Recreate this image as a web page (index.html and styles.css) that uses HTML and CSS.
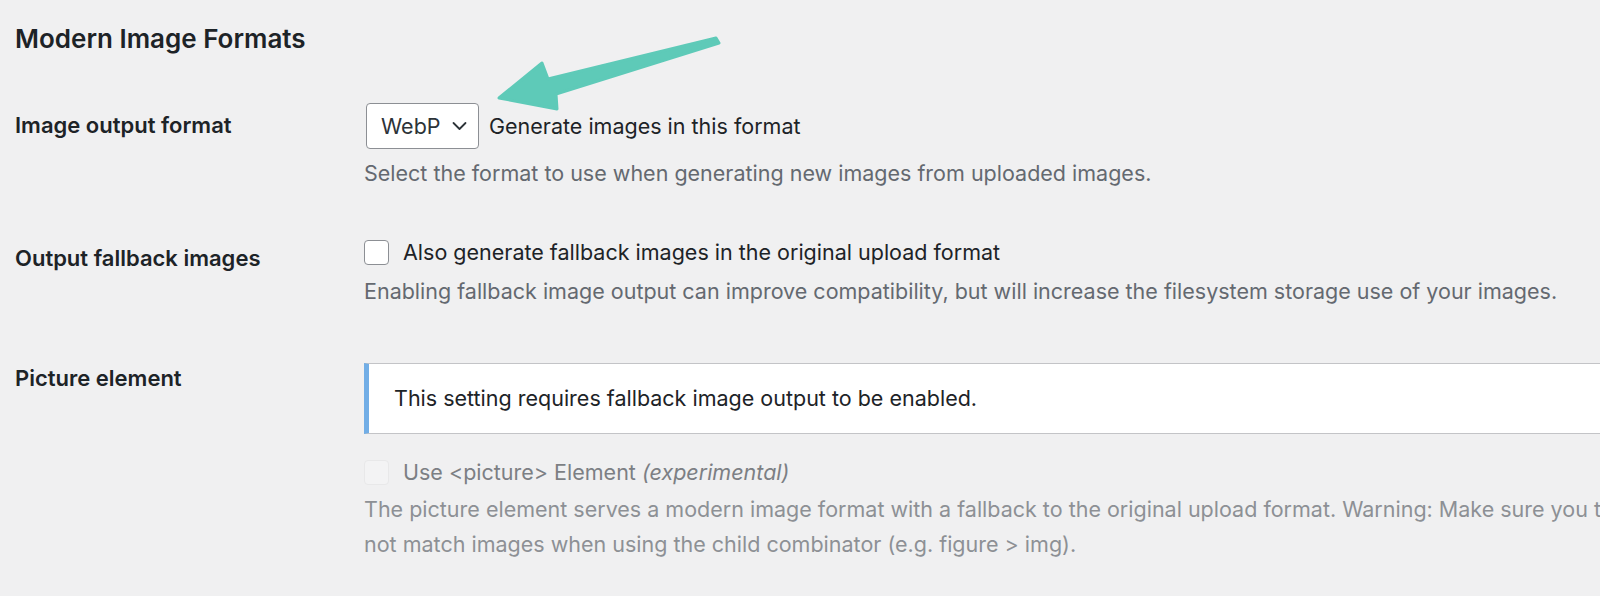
FILE: index.html
```html
<!DOCTYPE html>
<html lang="en">
<head>
    <meta charset="UTF-8">
    <meta name="viewport" content="width=device-width, initial-scale=1.0">
    <title>Media Settings</title>
    <link rel="stylesheet" href="styles.css">
</head>
<body>
    <div class="wrap">
        <h2 class="section-title">Modern Image Formats</h2>

        <div class="form-row row-format">
            <div class="row-label">Image output format</div>
            <div class="row-field">
                <div class="select-line">
                    <span class="select">
                        WebP
                        <svg class="chevron" width="15" height="10" viewBox="0 0 15 10"><path d="M1.5 2 L7.5 8 L13.5 2" fill="none" stroke="#2c3338" stroke-width="1.8" stroke-linecap="round" stroke-linejoin="round"/></svg>
                    </span>
                    <span class="after-select">Generate images in this format</span>
                </div>
                <p class="description">Select the format to use when generating new images from uploaded images.</p>
            </div>
        </div>

        <div class="form-row row-fallback">
            <div class="row-label">Output fallback images</div>
            <div class="row-field">
                <label class="check-line">
                    <span class="checkbox"></span>
                    <span>Also generate fallback images in the original upload format</span>
                </label>
                <p class="description">Enabling fallback image output can improve compatibility, but will increase the filesystem storage use of your images.</p>
            </div>
        </div>

        <div class="form-row row-picture">
            <div class="row-label">Picture element</div>
            <div class="row-field">
                <div class="notice">This setting requires fallback image output to be enabled.</div>
                <label class="check-line disabled">
                    <span class="checkbox"></span>
                    <span>Use &lt;picture&gt; Element <em>(experimental)</em></span>
                </label>
                <p class="description disabled">The picture element serves a modern image format with a fallback to the original upload format. Warning: Make sure you test your theme and plugins for compatibility. In particular, CSS selectors will<br>not match images when using the child combinator (e.g. figure &gt; img).</p>
            </div>
        </div>
    </div>

    <!-- annotation arrow drawn over the screenshot -->
    <svg class="pointer-arrow" width="1600" height="140" viewBox="0 0 1600 140">
        <polygon points="499,98 542,63 548,79 716,38 719,43 556,94 557,109" fill="#5ecab8" stroke="#5ecab8" stroke-width="3" stroke-linejoin="round"/>
    </svg>
</body>
</html>
```

FILE: styles.css
```css
html {
    background-color: #f0f0f1;
}

body {
    margin: 0;
    padding: 0;
    font-family: Inter, "Noto Sans", sans-serif;
    font-size: 21.5px;
    color: #1d2327;
    overflow: hidden;
    position: relative;
    height: 596px;
}

.wrap {
    padding-left: 15px;
    width: 2200px;
}

.section-title {
    margin: 0;
    padding-top: 23px;
    font-size: 26px;
    line-height: 32px;
    font-weight: 600;
}

.form-row {
    display: grid;
    grid-template-columns: 349px 1800px;
}

.row-label {
    font-size: 22px;
    font-weight: 600;
    line-height: 34px;
}

.row-field {
    line-height: 35px;
}

.description {
    margin: 0;
    color: #646970;
}

/* row 1 */
.row-format {
    margin-top: 48px;
}

.row-format .row-label {
    padding-top: 5px;
}

.select-line {
    display: flex;
    align-items: center;
    gap: 10px;
    padding-left: 2px;
}

.select {
    display: inline-flex;
    align-items: center;
    justify-content: space-between;
    box-sizing: border-box;
    width: 113px;
    height: 46px;
    padding: 0 11px 0 14px;
    background: #fff;
    border: 1px solid #8c8f94;
    border-radius: 4px;
    color: #2c3338;
}

.row-format .description {
    margin-top: 7px;
}

/* row 2 */
.row-fallback {
    margin-top: 44px;
}

.row-fallback .row-label {
    padding-top: 6px;
}

.check-line {
    display: flex;
    align-items: center;
    gap: 14px;
}

.checkbox {
    display: inline-block;
    box-sizing: border-box;
    width: 25px;
    height: 25px;
    background: #fff;
    border: 1px solid #8c8f94;
    border-radius: 4px;
}

.row-fallback .description {
    margin-top: 4px;
}

/* row 3 */
.row-picture {
    margin-top: 54px;
}

.row-picture .row-label {
    line-height: 31px;
}

.notice {
    box-sizing: border-box;
    height: 71px;
    padding: 17px 25px;
    background: #fff;
    border: 1px solid #c3c4c7;
    border-left: 5px solid #72aee6;
    border-right: none;
    color: #1d2327;
}

.check-line.disabled {
    margin-top: 21px;
    color: #7c7f84;
}

.check-line.disabled .checkbox {
    background: #f3f3f4;
    border-color: #e8e8e9;
}

.description.disabled {
    margin-top: 2px;
    white-space: nowrap;
    color: #8d9095;
}

.pointer-arrow {
    position: absolute;
    left: 0;
    top: 0;
}
```
